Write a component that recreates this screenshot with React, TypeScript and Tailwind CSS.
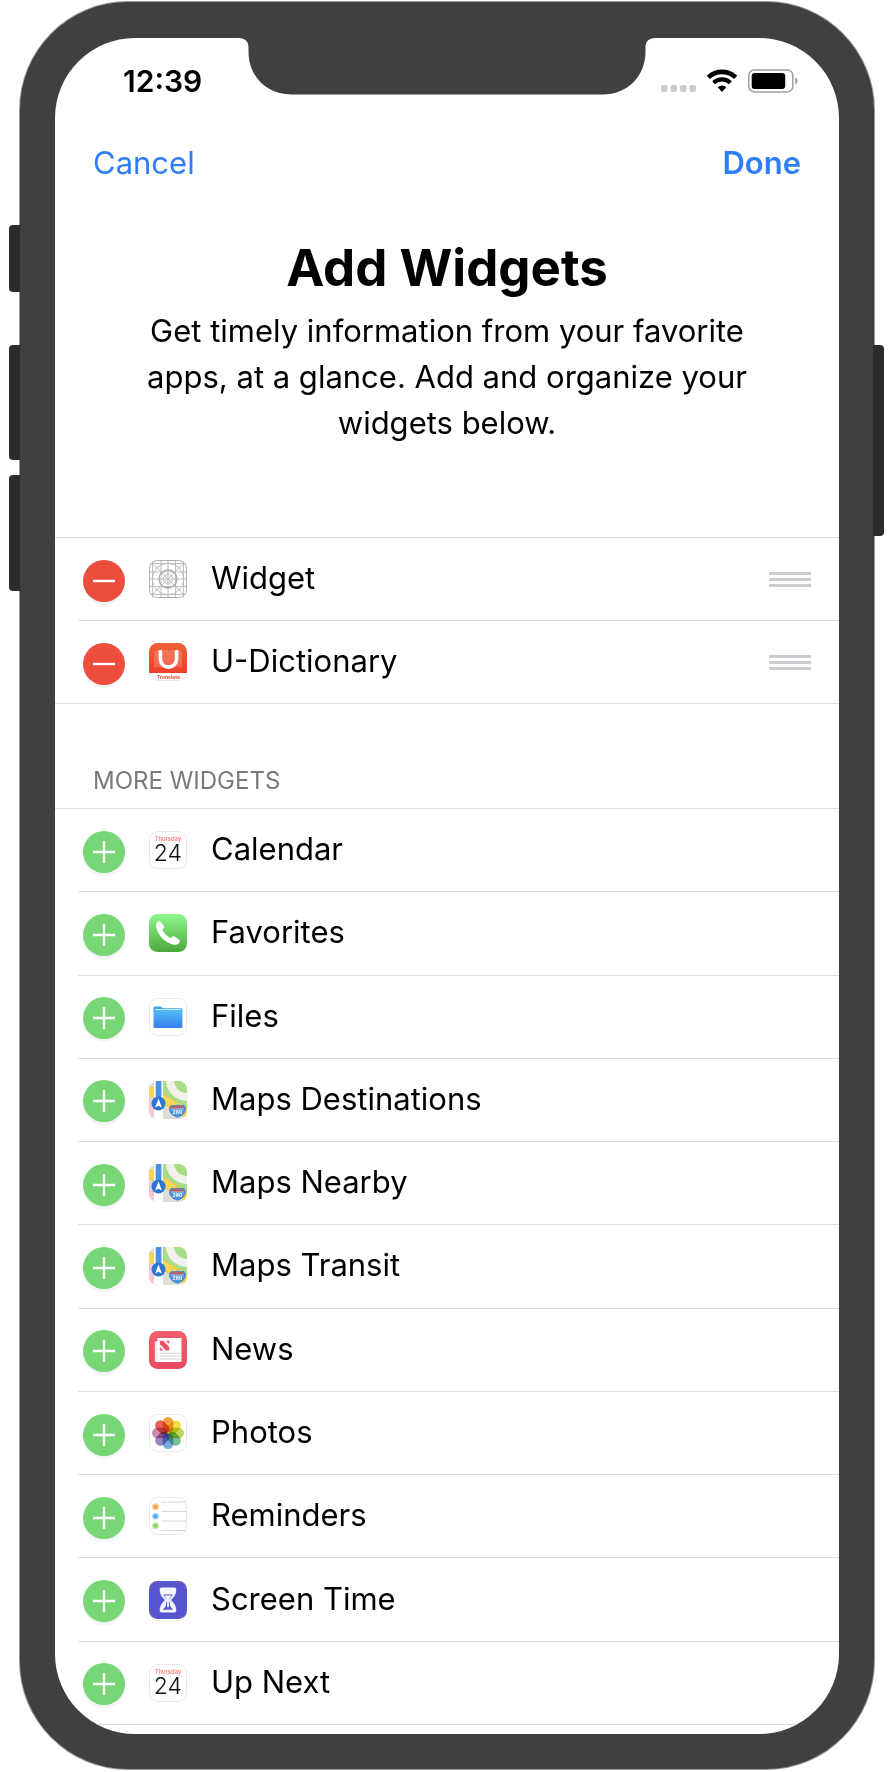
import type { ReactNode } from "react";

function Frame({ fill = "#fff", stroke = "#e9e9eb" }: { fill?: string; stroke?: string }) {
  return <rect x="0.5" y="0.5" width="37" height="37" rx="8" fill={fill} stroke={stroke} />;
}

function IconBox({ children }: { children: ReactNode }) {
  return (
    <svg aria-hidden="true" viewBox="0 0 38 38" className="size-[38px] shrink-0">
      {children}
    </svg>
  );
}

function TemplateIcon() {
  return (
    <IconBox>
      <Frame stroke="#aeaeae" />
      <g fill="none" stroke="#b9b9b9" strokeWidth="0.9">
        <path d="M3.5 1v36M12 1v36M19 1v36M26.5 1v36M34.5 1v36M1 3.5h36M1 12h36M1 19h36M1 26.5h36M1 34.5h36" />
        <path d="M3 3l32 32M35 3L3 35" />
        <circle cx="19" cy="19" r="15.7" />
        <circle cx="19" cy="19" r="9" strokeWidth="1.3" stroke="#a8a8a8" />
        <circle cx="19" cy="19" r="4.5" />
      </g>
    </IconBox>
  );
}

function DictionaryIcon() {
  return (
    <IconBox>
      <defs>
        <linearGradient id="dict" x1="0" y1="0" x2="0" y2="1">
          <stop offset="0" stopColor="#ef6238" />
          <stop offset="1" stopColor="#ee3f28" />
        </linearGradient>
      </defs>
      <Frame />
      <path d="M8.5 0h21a8.5 8.5 0 0 1 8.5 8.5V30H0V8.5A8.5 8.5 0 0 1 8.5 0z" fill="url(#dict)" />
      <path d="M5 9l4-2h8l2 1 2-1h8l4 2v16l-5-1-9 2-9-2-5 1z" fill="#fff" opacity="0.18" />
      <path d="M11.4 8.5v7.5a8.1 8.1 0 0 0 16.2 0V8.5" fill="none" stroke="#fff" strokeWidth="3.6" strokeLinecap="round" />
      <text x="19.5" y="35.6" textAnchor="middle" fontFamily="Inter, sans-serif" fontWeight="700" fontSize="5" fill="#e8503c">
        Translate
      </text>
    </IconBox>
  );
}

function CalendarIcon() {
  return (
    <IconBox>
      <Frame />
      <text x="19" y="10.3" textAnchor="middle" fontFamily="Inter, sans-serif" fontWeight="500" fontSize="5.9" fill="#fb6f68">
        Thursday
      </text>
      <text x="18.8" y="29.8" textAnchor="middle" fontFamily="Inter, sans-serif" fontWeight="300" fontSize="23" fill="#111">
        24
      </text>
    </IconBox>
  );
}

function PhoneIcon() {
  return (
    <IconBox>
      <defs>
        <linearGradient id="phone" x1="0" y1="0" x2="0" y2="1">
          <stop offset="0" stopColor="#8ff98d" />
          <stop offset="1" stopColor="#4aa83a" />
        </linearGradient>
      </defs>
      <rect width="38" height="38" rx="8.5" fill="url(#phone)" />
      <path
        d="M8.2 8.3c1-1.2 2.9-1.4 3.9-.1l2.7 3.7c.8 1.1.3 2.2-.6 2.9-.9.7-.8 1.3-.4 2 1.7 2.7 4 5 6.6 6.7.8.5 1.4.5 2.1-.3.8-1 1.9-1.3 2.900-.6l4.4 2.8c1.3.9 1.4 1.9.7 3-1.4 2.2-4 3-6.8 2.1C15.2 27.8 9.2 21.3 7.2 13.2c-.4-1.8-.2-3.5 1-4.9z"
        fill="#fff"
      />
    </IconBox>
  );
}

function FilesIcon() {
  return (
    <IconBox>
      <defs>
        <linearGradient id="files" x1="0" y1="0" x2="0" y2="1">
          <stop offset="0" stopColor="#50bdf7" />
          <stop offset="1" stopColor="#3a7df0" />
        </linearGradient>
      </defs>
      <Frame />
      <path d="M4.5 10.2c0-1 .6-1.6 1.5-1.6h5.4c1.5 0 1.7 1.7 3.2 1.7h17.2c1 0 1.6.5 1.6 1.5v2H4.5z" fill="#3fa5e8" />
      <path d="M6 11.7h26" stroke="#eaf6ff" strokeWidth="1" />
      <path d="M4.5 12.5h28.900v15.9c0 1-.6 1.6-1.6 1.6H6c-1 0-1.5-.6-1.5-1.6z" fill="url(#files)" />
    </IconBox>
  );
}

function MapsIcon({ id }: { id: string }) {
  return (
    <IconBox>
      <defs>
        <clipPath id={id}>
          <rect width="38" height="38" rx="8.5" />
        </clipPath>
      </defs>
      <g clipPath={`url(#${id})`}>
        <rect width="38" height="38" fill="#deded8" />
        <path d="M14 0h24v28L14 14z" fill="#a9dc86" />
        <circle cx="38" cy="-1" r="17" fill="none" stroke="#f2f0ea" strokeWidth="8" />
        <path d="M0 16l7 6v16H0z" fill="#f6c6d2" />
        <path d="M-2 8l42 26" stroke="#f1bd45" strokeWidth="9" />
        <path d="M-2 8l42 26" stroke="#fbd557" strokeWidth="7.5" />
        <path d="M31 38c3-1 5-3 7-6v6z" fill="#fbd557" />
        <path d="M5 0h9v38H5z" fill="#fff" />
        <path d="M6.7 0h5.7v22H6.7z" fill="#4a92e0" />
        <circle cx="9.5" cy="22.5" r="7" fill="#2d76d2" />
        <path d="M9.5 17.5l3.4 9-3.4-1.7-3.4 1.7z" fill="#fff" />
        <path
          d="M22.3 24.3c2 .7 4 .6 6.2-.3 2.2.9 4.2 1 6.2.3 2 1.9 2 4.1 1.2 6.3-1 3-4.2 4.500-7.4 5.6-3.2-1.1-6.4-2.6-7.4-5.6-.8-2.2-.8-4.400 1.2-6.300z"
          fill="#4a94de"
          stroke="#3a78c0"
          strokeWidth="0.8"
        />
        <path d="M22.2 25.4h12.6v2H22.2z" fill="#de5148" />
        <path d="M22 28h13" stroke="#dcebf8" strokeWidth="0.6" />
        <text x="28.5" y="32.8" textAnchor="middle" fontFamily="Inter, sans-serif" fontWeight="700" fontSize="5" fill="#fff">
          280
        </text>
      </g>
    </IconBox>
  );
}

function NewsIcon() {
  return (
    <IconBox>
      <defs>
        <linearGradient id="news" x1="0" y1="0" x2="0" y2="1">
          <stop offset="0" stopColor="#ee5f69" />
          <stop offset="1" stopColor="#ec4a62" />
        </linearGradient>
      </defs>
      <rect width="38" height="38" rx="8.5" fill="url(#news)" />
      <path d="M5.8 10.5h3V31H7.3c-1 0-1.5-.7-1.5-1.5z" fill="#f7e6e8" />
      <path d="M8.3 7h24.2v22.5c0 1-.6 1.5-1.5 1.5H7.8c.4-.4.5-.8.5-1.5z" fill="#fff" />
      <path d="M10.8 9.7h3.3l6.2 6.2v3.5h-3.3l-6.2-6.2z" fill="#ee5265" />
      <path d="M16.8 9.7h3.5v3.6zM10.8 15.9v3.5h3.5z" fill="#ee5265" />
      <path d="M10.8 22.3H32M10.8 25H32M10.8 28H32" stroke="#cfcfcf" strokeWidth="0.9" />
    </IconBox>
  );
}

const petals = ["#f2962d", "#ecdc2c", "#b5d147", "#6cb98c", "#6ba5dc", "#9078bd", "#cb7cab", "#e35245"];

function PhotosIcon() {
  return (
    <IconBox>
      <Frame />
      <g className="isolate">
        {petals.map((color, i) => (
          <rect
            key={color}
            x="13.7"
            y="3"
            width="10.6"
            height="15.5"
            rx="5.3"
            fill={color}
            opacity="0.9"
            transform={`rotate(${i * 45} 19 19)`}
            className="mix-blend-multiply"
          />
        ))}
      </g>
    </IconBox>
  );
}

function RemindersIcon() {
  return (
    <IconBox>
      <Frame />
      {[
        ["#f19a37", 9.7],
        ["#4aa8ee", 19.2],
        ["#7fd354", 28.7],
      ].map(([color, y]) => (
        <g key={color} fill={String(color)}>
          <circle cx="6.5" cy={y} r="3.4" opacity="0.5" />
          <circle cx="6.5" cy={y} r="2" />
        </g>
      ))}
      <path d="M12.5 5H37M12.5 14.4H37.5M12.5 24H37.5M12.5 33.5H37" stroke="#d6d6d8" strokeWidth="1" />
    </IconBox>
  );
}

function ScreenTimeIcon() {
  return (
    <IconBox>
      <rect width="38" height="38" rx="8.5" fill="#5756ce" />
      <path
        d="M13.2 6.5h11.6c1.8 0 2.6.8 2.5 2.2-.2 5-2.6 7.5-4.6 9.5-.6.6-.6 1.2 0 1.8 2 2 4.4 4.3 4.6 9.3.1 1.5-.7 2.2-2.5 2.2H13.2c-1.8 0-2.6-.7-2.5-2.2.2-5 2.6-7.3 4.6-9.3.6-.6.6-1.2 0-1.8-2-2-4.4-4.5-4.6-9.5-.1-1.4.7-2.2 2.5-2.2z"
        fill="#f5f5ff"
      />
      <path
        d="M14.4 13.4h9.2c-.7 1.7-1.9 3-3 4.1-.8.8-.8 2.2-.1 3.2.4.7.3 1.6.3 2.5 0 2 1.700 3.200 3.300 5.500H13.900c1.600-2.300 3.300-3.500 3.300-5.500 0-.9-.1-1.800.3-2.500.7-1 .7-2.400-.1-3.200-1.100-1.100-2.300-2.400-3-4.100z"
        fill="#5756ce"
      />
      <path d="M15.500 14.600h7l-2.600 3.700v8h-1.800v-8z" fill="#f5f5ff" />
    </IconBox>
  );
}

type Item = { name: string; icon: ReactNode };

const added: Item[] = [
  { name: "Widget", icon: <TemplateIcon /> },
  { name: "U-Dictionary", icon: <DictionaryIcon /> },
];

const more: Item[] = [
  { name: "Calendar", icon: <CalendarIcon /> },
  { name: "Favorites", icon: <PhoneIcon /> },
  { name: "Files", icon: <FilesIcon /> },
  { name: "Maps Destinations", icon: <MapsIcon id="maps-destinations" /> },
  { name: "Maps Nearby", icon: <MapsIcon id="maps-nearby" /> },
  { name: "Maps Transit", icon: <MapsIcon id="maps-transit" /> },
  { name: "News", icon: <NewsIcon /> },
  { name: "Photos", icon: <PhotosIcon /> },
  { name: "Reminders", icon: <RemindersIcon /> },
  { name: "Screen Time", icon: <ScreenTimeIcon /> },
  { name: "Up Next", icon: <CalendarIcon /> },
];

function Row({ item, kind }: { item: Item; kind: "remove" | "add" }) {
  const adding = kind === "add";
  return (
    <li className="group flex pl-[23px]">
      <div className="flex flex-1 items-center border-b border-[#dcdcde] pr-7 pl-[5px] group-last:-ml-[23px] group-last:pl-7">
        <button
          type="button"
          aria-label={`${adding ? "Add" : "Remove"} ${item.name}`}
          className={`mt-[3px] flex size-[42px] shrink-0 items-center justify-center rounded-full shadow-[0_3px_1px_rgba(0,0,0,0.05)] ${adding ? "bg-[#77d675]" : "bg-[#ec4d3d]"}`}
        >
          <svg aria-hidden="true" viewBox="0 0 22 22" className="size-[22px]" stroke="#fff" strokeWidth="2.4">
            <path d={adding ? "M0 11h22M11 0v22" : "M0 11h22"} />
          </svg>
        </button>
        <span className="ml-6 flex">{item.icon}</span>
        <span className="ml-6 flex-1 pb-0.5 text-[31px] leading-10">{item.name}</span>
        {!adding && (
          <button type="button" aria-label={`Reorder ${item.name}`} className="flex w-[42px] flex-col gap-[3px]">
            <span className="h-[3px] bg-[#cbcbd0]" />
            <span className="h-[3px] bg-[#cbcbd0]" />
            <span className="h-[3px] bg-[#cbcbd0]" />
          </button>
        )}
      </div>
    </li>
  );
}

function StatusBar() {
  return (
    <div className="flex items-center justify-between pt-[23px] pr-[41px] pl-[68px]">
      <span className="text-[30px] leading-10 font-semibold">12:39</span>
      <div className="flex items-center">
        <svg aria-hidden="true" viewBox="0 0 36 24" className="mr-2.5 h-6 w-9" fill="#cbcbcb">
          <rect x="0" y="16" width="6.5" height="7" rx="2" />
          <rect x="9.5" y="16" width="6.5" height="7" rx="2" />
          <rect x="19" y="16" width="6.5" height="7" rx="2" />
          <rect x="28.5" y="16" width="6.5" height="7" rx="2" />
        </svg>
        <svg aria-hidden="true" viewBox="0 0 30 24" className="mr-[11px] h-6 w-[30px]">
          <path d="M1.3 8.4a19.8 19.8 0 0 1 27.4 0" fill="none" stroke="#000" strokeWidth="4.6" />
          <path d="M6.6 13.8a12.2 12.2 0 0 1 16.8 0" fill="none" stroke="#000" strokeWidth="4.2" />
          <path d="M10.7 18.3a6.2 6.2 0 0 1 8.6 0L15 23z" fill="#000" />
        </svg>
        <svg aria-hidden="true" viewBox="0 0 50 24" className="h-6 w-[50px]">
          <rect x="0.8" y="0.9" width="44" height="22" rx="5.5" fill="none" stroke="#9d9d9d" strokeWidth="1.5" />
          <rect x="3.7" y="4" width="33.5" height="16" rx="3" fill="#000" />
          <path d="M47.2 8.5c1.5.6 2.3 1.9 2.3 3.5s-.8 2.9-2.3 3.5z" fill="#9d9d9d" />
        </svg>
      </div>
    </div>
  );
}

export default function App() {
  return (
    <div className="bg-white px-5 pt-0.5 pb-[3px] font-['Inter',sans-serif] text-black">
      <div className="relative rounded-[108px] bg-[#404040] px-[35px] pt-9 pb-[35px] shadow-[0_0_0_1px_#9a9a9a]">
        <span className="absolute top-[223px] -left-[11px] h-[67px] w-[11px] rounded-l-[4px] bg-[#2b2b2b]" />
        <span className="absolute top-[343px] -left-[11px] h-[115px] w-[11px] rounded-l-[4px] bg-[#2b2b2b]" />
        <span className="absolute top-[473px] -left-[11px] h-[116px] w-[11px] rounded-l-[4px] bg-[#2b2b2b]" />
        <span className="absolute top-[343px] -right-[10px] h-[191px] w-[11px] rounded-r-[4px] bg-[#2b2b2b]" />

        <main className="relative overflow-hidden rounded-[80px] bg-white pb-[9px]">
          <svg aria-hidden="true" viewBox="0 0 416 57" className="absolute top-0 left-1/2 h-[57px] w-[416px] -translate-x-1/2" fill="#404040">
            <path d="M0 0h416c-6 0-9.5 3.5-9.5 9.5v4c0 25-18 43-43 43h-311c-25 0-43-18-43-43v-4C9.5 3.5 6 0 0 0z" />
          </svg>
          <StatusBar />

          <nav className="flex items-center justify-between px-[38px] pt-[39px] text-[31px] leading-[46px] text-[#2e7ff7]">
            <button type="button">Cancel</button>
            <button type="button" className="font-semibold">Done</button>
          </nav>

          <header className="flex flex-col items-center px-20 pt-[52px] pb-[91px] text-center">
            <h1 className="text-[51px] leading-[60px] font-bold">Add Widgets</h1>
            <p className="mt-2.5 max-w-[610px] text-[31px] leading-[46px]">
              Get timely information from your favorite apps, at a glance. Add and organize your widgets below.
            </p>
          </header>

          <ul className="grid min-h-[167px] auto-rows-fr border-t border-[#dcdcde]">
            {added.map((item) => (
              <Row key={item.name} item={item} kind="remove" />
            ))}
          </ul>

          <section>
            <h2 className="px-[38px] pt-[61px] pb-[11px] text-2xl text-[#79797e]">MORE WIDGETS</h2>
            <ul className="grid min-h-[917px] auto-rows-fr border-t border-[#dcdcde]">
              {more.map((item) => (
                <Row key={item.name} item={item} kind="add" />
              ))}
            </ul>
          </section>
        </main>
      </div>
    </div>
  );
}
